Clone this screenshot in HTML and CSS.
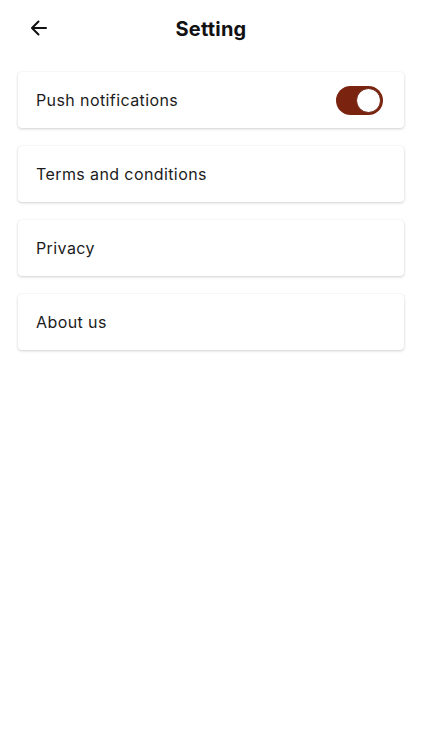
FILE: index.html
```html
<!DOCTYPE html>
<html>
<head>
<meta charset="utf-8">
<link rel="stylesheet" href="styles.css">
</head>
<body>
<div class="page">
  <header class="header">
    <button class="back" aria-label="Back">
      <svg width="20" height="20" viewBox="0 0 20 20" fill="none" stroke="#111" stroke-width="2" stroke-linecap="round" stroke-linejoin="round"><path d="M17 10H3.5M9.5 3.5 3 10l6.5 6.5"/></svg>
    </button>
    <h1 class="title">Setting</h1>
  </header>
  <div class="list">
    <div class="card">
      <span class="label">Push notifications</span>
      <span class="toggle"><span class="knob"></span></span>
    </div>
    <div class="card"><span class="label">Terms and conditions</span></div>
    <div class="card"><span class="label">Privacy</span></div>
    <div class="card"><span class="label">About us</span></div>
  </div>
</div>
</body>
</html>
```
FILE: styles.css
```css
* { box-sizing: border-box; }
html, body { margin: 0; padding: 0; background: #fff; }
body { font-family: Inter, "Noto Sans", sans-serif; color: #1a1a1a; }
.page { width: 422px; min-height: 750px; }
.header {
  position: relative;
  height: 57px;
  display: flex;
  align-items: center;
  justify-content: center;
}
.back {
  position: absolute;
  left: 29px;
  top: 18px;
  width: 20px;
  height: 20px;
  padding: 0;
  border: 0;
  background: none;
  display: flex;
}
.title {
  margin: 0;
  font-size: 20px;
  font-weight: 700;
  color: #111;
  letter-spacing: 0.2px;
}
.list {
  display: flex;
  flex-direction: column;
  gap: 18px;
  padding: 15px 18px 0;
}
.card {
  height: 56px;
  background: #fff;
  border-radius: 4px;
  box-shadow: 0 1px 3px rgba(0,0,0,0.18), 0 0 1px rgba(0,0,0,0.08);
  display: flex;
  align-items: center;
  justify-content: space-between;
  padding: 0 21px 0 18px;
}
.label { font-size: 16px; color: #1c1c1c; letter-spacing: 0.4px; }
.toggle {
  width: 47px;
  height: 29px;
  border-radius: 15px;
  background: #7a2410;
  display: flex;
  align-items: center;
  justify-content: flex-end;
  padding: 2px;
}
.knob {
  width: 25px;
  height: 25px;
  border-radius: 50%;
  background: #fff;
  border: 1.5px solid #6e1f0c;
}
```
